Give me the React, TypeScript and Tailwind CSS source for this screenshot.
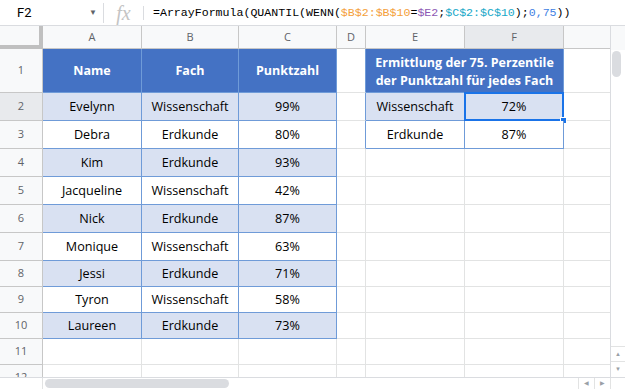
import React from "react";

const people = [
  ["Evelynn", "Wissenschaft", "99%"],
  ["Debra", "Erdkunde", "80%"],
  ["Kim", "Erdkunde", "93%"],
  ["Jacqueline", "Wissenschaft", "42%"],
  ["Nick", "Erdkunde", "87%"],
  ["Monique", "Wissenschaft", "63%"],
  ["Jessi", "Erdkunde", "71%"],
  ["Tyron", "Wissenschaft", "58%"],
  ["Laureen", "Erdkunde", "73%"],
];

const summary = [
  ["Wissenschaft", "72%"],
  ["Erdkunde", "87%"],
];

const cellBase =
  "shrink-0 h-full box-border border-r border-b flex items-center justify-center";
const grid = "border-[#e2e3e3] bg-white";
const tbl = "border-[#6f9bd8] pt-[2px]";

function HeaderCell({ w, active, children }: { w: string; active?: boolean; children?: React.ReactNode }) {
  return (
    <div
      className={`${cellBase} ${w} border-[#c7c7c7] ${active ? "bg-[#e8eaed]" : "bg-[#f8f9fa]"} text-[11px] text-[#5f6368] pt-[1px]`}
    >
      {children}
    </div>
  );
}

function RowHead({ n, active }: { n: number; active?: boolean }) {
  return (
    <div
      className={`${cellBase} w-[43px] border-[#c7c7c7] ${active ? "bg-[#e8eaed]" : "bg-[#f8f9fa]"} text-[11px] text-[#5f6368]`}
    >
      {n}
    </div>
  );
}

export default function App() {
  const heights = ["h-[28px]", "h-[28px]", "h-[28px]", "h-[28px]", "h-[28px]", "h-[28px]", "h-[26px]", "h-[26px]", "h-[26px]", "h-[26px]", "h-[26px]"];

  return (
    <div
      className="w-[625px] h-[389px] overflow-hidden bg-white flex flex-col text-black"
      style={{ fontFamily: "'Open Sans', 'Noto Sans', sans-serif" }}
    >
      {/* formula bar */}
      <div className="h-[26px] shrink-0 border-b border-[#dadce0] flex items-center">
        <div className="w-[103px] h-full flex items-center justify-between pl-[17px] pr-[6px] text-[13px]" style={{ fontFamily: "Roboto, sans-serif" }}>
          <span>F2</span>
          <span className="text-[8px] text-[#5f6368]">▼</span>
        </div>
        <div className="w-px h-[20px] bg-[#dadce0]" />
        <div className="w-[39px] flex justify-center">
          <span className="italic text-[20px] leading-none text-[#c4c4c4]" style={{ fontFamily: "'Liberation Serif', serif" }}>
            fx
          </span>
        </div>
        <div className="w-px h-[14px] bg-[#dadce0]" />
        <div className="pl-[9px] text-[11.6px] whitespace-nowrap" style={{ fontFamily: "'Liberation Mono', monospace" }}>
          =ArrayFormula(QUANTIL(WENN(<span className="text-[#f4a03a]">$B$2:$B$10</span>=
          <span className="text-[#8e58b4]">$E2</span>;<span className="text-[#17a8c8]">$C$2:$C$10</span>);
          <span className="text-[#3f7fe3]">0,75</span>))
        </div>
      </div>

      {/* sheet body */}
      <div className="h-[351px] shrink-0 flex">
        <div className="flex-1 overflow-hidden flex flex-col">
          {/* column headers */}
          <div className="h-[23px] shrink-0 flex">
            <div className="shrink-0 w-[43px] h-full box-border bg-[#f8f9fa] border-r-4 border-b-4 border-[#c0c0c0]" />
            <HeaderCell w="w-[99px]">A</HeaderCell>
            <HeaderCell w="w-[97px]">B</HeaderCell>
            <HeaderCell w="w-[98px]">C</HeaderCell>
            <HeaderCell w="w-[29px]">D</HeaderCell>
            <HeaderCell w="w-[99px]">E</HeaderCell>
            <HeaderCell w="w-[99px]" active>F</HeaderCell>
            <div className="flex-1 h-full box-border border-b border-[#c7c7c7] bg-[#f8f9fa]" />
          </div>

          {/* row 1 */}
          <div className="h-[44px] shrink-0 flex">
            <RowHead n={1} />
            {["Name", "Fach", "Punktzahl"].map((t, i) => (
              <div
                key={t}
                className={`${cellBase} ${i === 0 ? "w-[99px]" : i === 1 ? "w-[97px]" : "w-[98px]"} ${tbl} bg-[#4472c4] text-white font-bold text-[12.5px]`}
              >
                {t}
              </div>
            ))}
            <div className={`${cellBase} w-[29px] bg-white border-b-[#e2e3e3] border-r-[#6f9bd8]`} />
            <div className={`${cellBase} w-[198px] ${tbl} bg-[#4472c4] text-white font-bold text-[12.5px] leading-[18px] text-center`}>
              Ermittlung der 75. Perzentile
              <br />
              der Punktzahl für jedes Fach
            </div>
            <div className={`flex-1 h-full box-border border-b ${grid}`} />
          </div>

          {/* rows 2..12 */}
          {heights.map((h, idx) => {
            const r = idx + 2;
            const p = people[idx];
            const s = r <= 3 ? summary[idx] : null;
            const band = idx % 2 === 0 ? "bg-[#d9e1f2]" : "bg-white";
            return (
              <div key={r} className={`${h} shrink-0 flex text-[12.6px]`}>
                <RowHead n={r} active={r === 2} />
                {p ? (
                  <>
                    <div className={`${cellBase} w-[99px] ${tbl} ${band}`}>{p[0]}</div>
                    <div className={`${cellBase} w-[97px] ${tbl} ${band}`}>{p[1]}</div>
                    <div className={`${cellBase} w-[98px] ${tbl} ${band}`}>{p[2]}</div>
                  </>
                ) : (
                  <>
                    <div className={`${cellBase} w-[99px] ${grid}`} />
                    <div className={`${cellBase} w-[97px] ${grid}`} />
                    <div className={`${cellBase} w-[98px] ${grid}`} />
                  </>
                )}
                {s ? (
                  <>
                    <div className={`${cellBase} w-[29px] bg-white border-b-[#e2e3e3] border-r-[#6f9bd8]`} />
                    <div className={`${cellBase} w-[99px] ${tbl} ${band}`}>{s[0]}</div>
                    <div className={`${cellBase} w-[99px] ${tbl} ${band} relative`}>
                      {s[1]}
                      {r === 2 && (
                        <>
                          <div className="absolute -left-px -top-px right-[-1px] bottom-[-1px] border-2 border-[#1a73e8]" />
                          <div className="absolute right-[-4px] bottom-[-4px] w-[7px] h-[7px] bg-[#1a73e8] border border-white" />
                        </>
                      )}
                    </div>
                  </>
                ) : (
                  <>
                    <div className={`${cellBase} w-[29px] ${grid}`} />
                    <div className={`${cellBase} w-[99px] ${grid}`} />
                    <div className={`${cellBase} w-[99px] ${grid}`} />
                  </>
                )}
                <div className={`flex-1 h-full box-border border-b ${grid}`} />
              </div>
            );
          })}
        </div>

        {/* vertical scrollbar */}
        <div className="w-[15px] shrink-0 border-l border-[#dadce0] flex flex-col">
          <div className="h-[24px] bg-[#f8f9fa]" />
          <div className="flex-1 bg-white pt-[1px] pl-[1px]">
            <div className="w-[9px] h-[26px] rounded-full bg-[#dadce0]" />
          </div>
          <div className="h-[15px] border-t border-[#e2e3e3] flex items-center justify-center text-[6px] text-[#9aa0a6]">▲</div>
          <div className="h-[16px] border-t border-[#e2e3e3] flex items-center justify-center text-[6px] text-[#9aa0a6]">▼</div>
        </div>
      </div>

      {/* horizontal scrollbar */}
      <div className="h-[12px] shrink-0 border-t border-[#dadce0] flex">
        <div className="w-[43px] shrink-0 border-r border-[#e2e3e3]" />
        <div className="flex-1 pt-[1px] pl-[2px]">
          <div className="w-[184px] h-[9px] rounded-full bg-[#dadce0]" />
        </div>
        <div className="w-[16px] shrink-0 border-l border-[#e2e3e3] flex items-center justify-center text-[6px] text-[#9aa0a6]">◀</div>
        <div className="w-[16px] shrink-0 border-l border-[#e2e3e3] flex items-center justify-center text-[6px] text-[#9aa0a6]">▶</div>
        <div className="w-[15px] shrink-0 border-l border-[#e2e3e3]" />
      </div>
    </div>
  );
}
